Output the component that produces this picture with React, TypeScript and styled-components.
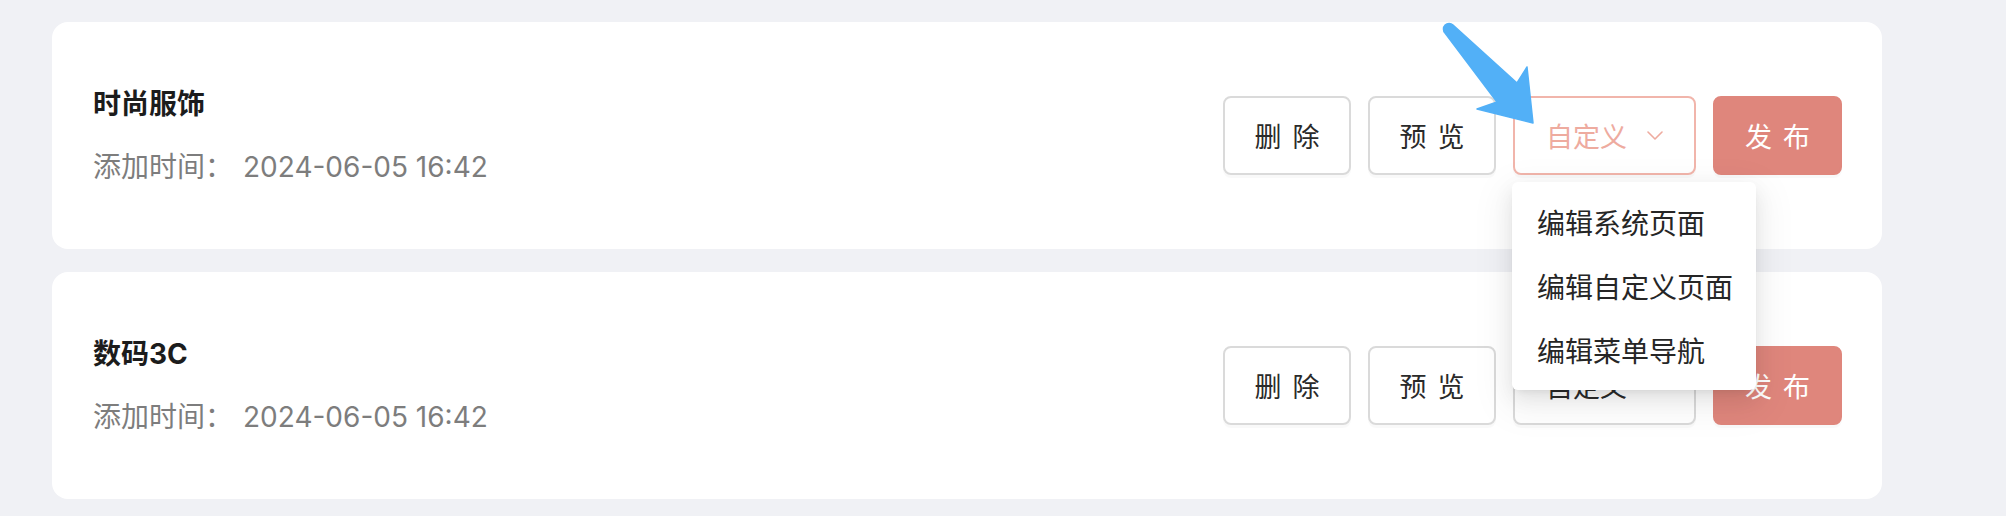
import React from "react";
import styled, { createGlobalStyle } from "styled-components";

const GlobalStyle = createGlobalStyle`
  html, body {
    margin: 0;
    padding: 0;
    background: #f0f1f5;
  }
  body {
    font-family: Inter, "Noto Sans CJK SC", "Noto Sans", sans-serif;
    -webkit-font-smoothing: antialiased;
  }
`;

const Page = styled.div`
  position: relative;
  width: 2006px;
  height: 516px;
  box-sizing: border-box;
  padding: 22px 0 0 52px;
  display: flex;
  flex-direction: column;
  gap: 23px;
`;

const Card = styled.div`
  width: 1830px;
  height: 227px;
  box-sizing: border-box;
  background: #ffffff;
  border-radius: 16px;
  padding: 0 40px 0 41px;
  display: flex;
  align-items: center;
  justify-content: space-between;
`;

const Info = styled.div`
  display: flex;
  flex-direction: column;
  gap: 25px;
`;

const Title = styled.div`
  font-size: 28px;
  line-height: 38px;
  font-weight: 700;
  color: #1c1c1c;
`;

const Meta = styled.div`
  display: flex;
  align-items: center;
  font-size: 28px;
  line-height: 38px;
  color: #7d7d7d;
`;

const MetaValue = styled.span`
  margin-left: 10px;
`;

const Actions = styled.div`
  display: flex;
  gap: 17px;
`;

const DropWrap = styled.div`
  position: relative;
  display: flex;
`;

type BtnVariant = "default" | "active" | "primary";

const Btn = styled.button<{ $w: number; $variant?: BtnVariant }>`
  width: ${(p) => p.$w}px;
  height: 79px;
  box-sizing: border-box;
  border-radius: 8px;
  font-family: Inter, "Noto Sans CJK SC", sans-serif;
  font-size: 27px;
  display: flex;
  align-items: center;
  justify-content: center;
  gap: 20px;
  padding: 0;
  cursor: pointer;
  box-shadow: 0 3px 0 rgba(0, 0, 0, 0.025);
  border: 2px solid
    ${(p) =>
      p.$variant === "active"
        ? "#f1b5ab"
        : p.$variant === "primary"
        ? "#df867c"
        : "#dadada"};
  background: ${(p) => (p.$variant === "primary" ? "#df867c" : "#ffffff")};
  color: ${(p) =>
    p.$variant === "active"
      ? "#eeab9f"
      : p.$variant === "primary"
      ? "#ffffff"
      : "#2a2a2a"};
`;

const Spaced = styled.span`
  letter-spacing: 11px;
  margin-right: -11px;
`;

const Menu = styled.div`
  position: absolute;
  top: calc(100% + 7px);
  left: -1px;
  width: 244px;
  box-sizing: border-box;
  padding: 8px 0;
  background: #ffffff;
  border-radius: 6px;
  z-index: 10;
  box-shadow: 0 8px 20px 0 rgba(0, 0, 0, 0.08),
    0 4px 8px -5px rgba(0, 0, 0, 0.12), 0 12px 36px 10px rgba(0, 0, 0, 0.05);
`;

const MenuItem = styled.div`
  height: 64px;
  display: flex;
  align-items: center;
  padding-left: 25px;
  font-size: 28px;
  color: #262626;
  white-space: nowrap;
`;

const Arrow = styled.svg`
  position: absolute;
  left: 1430px;
  top: 15px;
  z-index: 20;
`;

const Chevron = ({ color }: { color: string }) => (
  <svg width="16" height="9" viewBox="0 0 16 9" fill="none">
    <polyline
      points="1,1 8,8 15,1"
      stroke={color}
      strokeWidth="1.6"
      strokeLinecap="round"
      strokeLinejoin="round"
    />
  </svg>
);

type Item = { title: string; time: string; open: boolean };

const items: Item[] = [
  { title: "时尚服饰", time: "2024-06-05 16:42", open: true },
  { title: "数码3C", time: "2024-06-05 16:42", open: false },
];

export default function App() {
  return (
    <>
      <GlobalStyle />
      <Page>
        {items.map((it) => (
          <Card key={it.title}>
            <Info>
              <Title>{it.title}</Title>
              <Meta>
                添加时间：<MetaValue>{it.time}</MetaValue>
              </Meta>
            </Info>
            <Actions>
              <Btn $w={128}>
                <Spaced>删除</Spaced>
              </Btn>
              <Btn $w={128}>
                <Spaced>预览</Spaced>
              </Btn>
              <DropWrap>
                <Btn $w={183} $variant={it.open ? "active" : "default"}>
                  <span>自定义</span>
                  <Chevron color={it.open ? "#eeab9f" : "#8a8a8a"} />
                </Btn>
                {it.open && (
                  <Menu>
                    <MenuItem>编辑系统页面</MenuItem>
                    <MenuItem>编辑自定义页面</MenuItem>
                    <MenuItem>编辑菜单导航</MenuItem>
                  </Menu>
                )}
              </DropWrap>
              <Btn $w={129} $variant="primary">
                <Spaced>发布</Spaced>
              </Btn>
            </Actions>
          </Card>
        ))}
        <Arrow width="120" height="120" viewBox="0 0 120 120">
          <path
            d="M23,10 L87,68 L97,52 L103,108 L47,94 L67,87 L15,18 A5.66,5.66 0 0 1 23,10 Z"
            fill="#52b0f7"
            strokeLinejoin="round"
            stroke="#52b0f7"
            strokeWidth="1.5"
          />
        </Arrow>
      </Page>
    </>
  );
}
